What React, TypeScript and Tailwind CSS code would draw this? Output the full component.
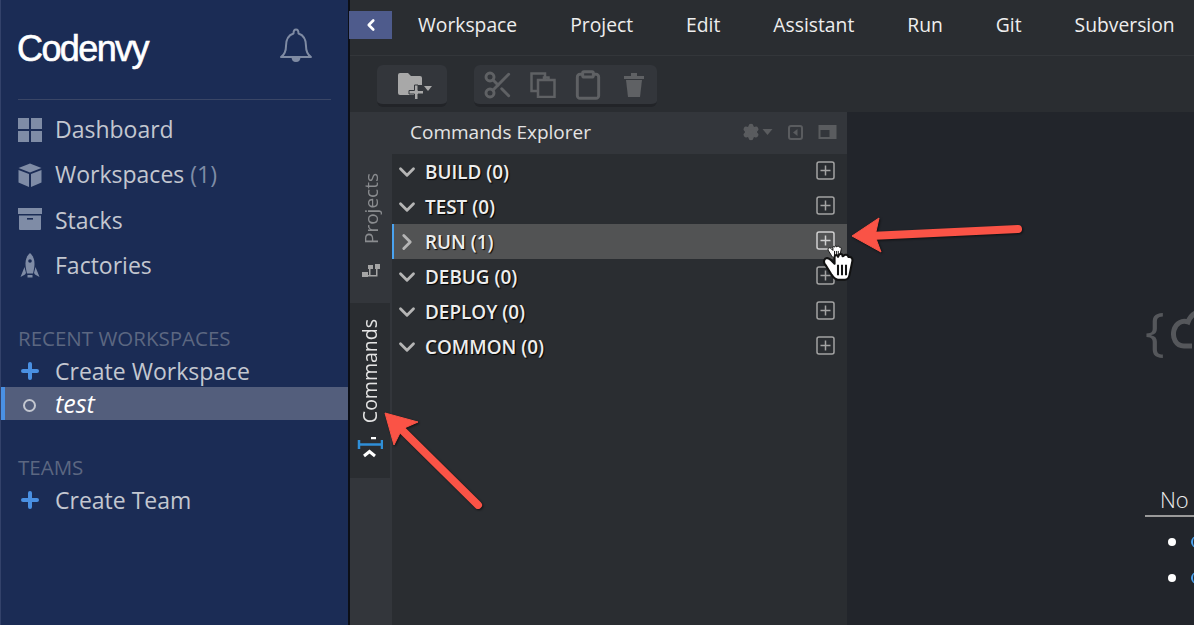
import { Scissors, Clipboard, Plus, Settings, ChevronDown, ChevronRight, ChevronLeft } from 'lucide-react'

const menuItems = ['Workspace', 'Project', 'Edit', 'Assistant', 'Run', 'Git', 'Subversion']
const commandGroups = [
    { name: 'BUILD (0)' },
    { name: 'TEST (0)' },
    { name: 'RUN (1)', active: true },
    { name: 'DEBUG (0)' },
    { name: 'DEPLOY (0)' },
    { name: 'COMMON (0)' },
]

function DashboardIcon() {
    return (
        <svg width="26" height="26" viewBox="0 0 26 26" fill="#7f8ca6">
            <rect x="1" y="1" width="11" height="11" />
            <rect x="14" y="1" width="11" height="11" />
            <rect x="1" y="14" width="11" height="11" />
            <rect x="14" y="14" width="11" height="11" />
        </svg>
    )
}

function CubeIcon() {
    return (
        <svg width="26" height="26" viewBox="0 0 26 26" fill="#7f8ca6">
            <path d="M13 1.500 24.500 6 13 10.500 1.500 6z" />
            <path d="M1.500 8 12 12v13L1.500 20.500z" />
            <path d="M24.500 8 14 12v13l10.500-4.500z" />
        </svg>
    )
}

function StacksIcon() {
    return (
        <svg width="26" height="26" viewBox="0 0 26 26" fill="#7f8ca6">
            <rect x="1" y="1" width="24" height="6" />
            <path d="M2 8.500h22V22a1 1 0 0 1-1 1H3a1 1 0 0 1-1-1z" />
            <rect x="10" y="11" width="6" height="1.600" fill="#1b2c55" />
        </svg>
    )
}

function RocketIcon() {
    return (
        <svg width="26" height="26" viewBox="0 0 26 26" fill="#7f8ca6">
            <path d="M13 0c3.500 3 4.500 7 4.500 10.500 0 3.500-.8 7-1.500 10h-6c-.7-3-1.500-6.500-1.500-10C8.500 7 9.500 3 13 0z" />
            <circle cx="13" cy="8" r="1.800" fill="#1b2c55" />
            <path d="M7.500 14 3.500 24l4.500-2.500 1-1.500zM18.500 14l4 10-4.500-2.500-1-1.500z" />
            <rect x="10.500" y="22" width="5" height="2.500" />
        </svg>
    )
}

function BellIcon() {
    return (
        <svg width="36" height="36" viewBox="0 0 36 36" fill="none" stroke="#7f8ba3" strokeWidth="2">
            <path d="M3 30c3-2 5-5 5-11 0-7 3-11 7.500-12.500C15.500 4 16.500 2.500 18 2.500S20.500 4 20.500 6.500C25 8 28 12 28 19c0 6 2 9 5 11z" strokeLinejoin="round" />
            <path d="M14.500 30c0 2.500 1.500 4 3.500 4s3.500-1.500 3.500-4" fill="#7f8ba3" />
        </svg>
    )
}

function NavRow({ icon, label, count }: { icon: React.ReactNode; label: string; count?: string }) {
    return (
        <div className="flex h-[45.3px] items-center pl-[16px]">
            <span className="flex w-[38px]">{icon}</span>
            <span className="text-[23px] leading-none text-[#c3c7d0]">
                {label}
                {count && <span className="text-[#7f8ca6]"> {count}</span>}
            </span>
        </div>
    )
}

function FolderPlusIcon() {
    return (
        <svg width="36" height="28" viewBox="0 0 36 28" fill="#a8a8a8">
            <path d="M1 3a2 2 0 0 1 2-2h8l3 3h9a2 2 0 0 1 2 2v7H19v10H3a2 2 0 0 1-2-2z" />
            <path d="M17.500 13h3.500v5.500h5.500V22H21v5.500h-3.500V22H12v-3.500h5.500z" stroke="#33363b" strokeWidth="1" />
            <path d="M27 14h8l-4 5z" />
        </svg>
    )
}

function CopyIcon() {
    return (
        <svg width="26" height="26" viewBox="0 0 26 26" fill="none" stroke="#5f6164" strokeWidth="2.500">
            <path d="M8 19H1.500V1.500H15V7" />
            <path d="M8 8h16.500v17H8z" />
            <path d="M14 8V5.500h4.500V8" />
        </svg>
    )
}

function TrashIcon() {
    return (
        <svg width="22" height="26" viewBox="0 0 22 26" fill="#5f6164">
            <path d="M1 4h20v3H1zM8 1h6v3H8z" />
            <path d="M3 8h16l-2 17H5z" />
        </svg>
    )
}

function ProjectsTabIcon() {
    return (
        <svg width="18" height="14" viewBox="0 0 18 14" fill="#a5a5a5">
            <rect x="0" y="8" width="6" height="5" />
            <rect x="6" y="1" width="5" height="4" />
            <rect x="13" y="0" width="5" height="5" />
            <path d="M7 5h1.500v6H14V5h1.500v7.500H6V11h1z" />
        </svg>
    )
}

function CommandsTabIcon() {
    return (
        <svg width="26" height="22" viewBox="0 0 26 22">
            <path d="M2 3v9M25 3v9" stroke="#2f8fd8" strokeWidth="2.500" />
            <path d="M2 7.500h23" stroke="#2f8fd8" strokeWidth="2.500" />
            <path d="M14 1h5" stroke="#fff" strokeWidth="2.500" />
            <path d="M7 19l5.500-4.500L18 19" fill="none" stroke="#fff" strokeWidth="3" />
        </svg>
    )
}

function HandCursor({ size, className }: { size: number; className: string }) {
    return (
        <svg width={size} height={size} viewBox="0 0 28 28" className={className}>
            <path
                d="M2 9C3 6 6 7 8 9l3 3V6c0-2 3-2 3 0l.5-1c.5-2 3.500-2 3.500.5l1-.5c1-1.500 4-1 4 1h1c2 0 3 2 2.500 4L24 22c-.5 3-2 4-4 4h-6c-3 0-4-2-6-5L3 13c-1-1-1.500-2.500-1-4z"
                fill="#fff"
                stroke="#111"
                strokeWidth="1.800"
                strokeLinejoin="round"
            />
            <path d="M14 13v9M17.500 13v9M21 13v9" stroke="#111" strokeWidth="1.800" />
        </svg>
    )
}

export default function App() {
    return (
        <div className="relative flex h-[625px] w-[1194px] overflow-hidden font-['Open_Sans',sans-serif]">
            <aside className="w-[348px] shrink-0 border-l border-[#33426a] bg-[#1b2c55]">
                <div className="flex h-[99px] items-start justify-between pl-[16px] pr-[34px] pt-[27px]">
                    <span className="mt-[4px] font-['Liberation_Sans',sans-serif] text-[36px] leading-none font-normal tracking-[-1.600px] text-white [-webkit-text-stroke:0.6px_#fff]">
                        Codenvy
                    </span>
                    <BellIcon />
                </div>
                <div className="mx-[17px] h-px bg-[#3a4666]" />
                <nav className="mt-[7px]">
                    <NavRow icon={<DashboardIcon />} label="Dashboard" />
                    <NavRow icon={<CubeIcon />} label="Workspaces" count="(1)" />
                    <NavRow icon={<StacksIcon />} label="Stacks" />
                    <NavRow icon={<RocketIcon />} label="Factories" />
                </nav>
                <div className="mt-[36px] pl-[17px] text-[20.500px] leading-[28px] whitespace-nowrap text-[#5c6781]">RECENT WORKSPACES</div>
                <div className="mt-[3px] flex h-[32px] items-center pl-[16px] text-[23px] text-[#c3c7d0]">
                    <span className="flex w-[38px] pl-[1px]">
                        <Plus size={24} strokeWidth={4} color="#4a90e2" />
                    </span>
                    Create Workspace
                </div>
                <div className="flex h-[33px] items-center border-l-4 border-[#4a90e2] bg-[#535e7c] pl-[18px] text-[25px] text-white italic">
                    <span className="mr-[19px] mt-[3px] h-[13px] w-[13px] rounded-full border-2 border-[#c3c7d0]" />
                    test
                </div>
                <div className="mt-[33px] pl-[17px] text-[20.500px] leading-[28px] text-[#5c6781]">TEAMS</div>
                <div className="mt-[3px] flex h-[32px] items-center pl-[16px] text-[23px] text-[#c3c7d0]">
                    <span className="flex w-[38px] pl-[1px]">
                        <Plus size={24} strokeWidth={4} color="#4a90e2" />
                    </span>
                    Create Team
                </div>
            </aside>

            <main className="flex min-w-0 flex-1 flex-col border-l-2 border-[#0c0f16] bg-[#2a2d31]">
                <header className="flex h-[56px] shrink-0 items-start border-b border-[#33363a] pt-[11px]">
                    <button className="ml-[-1px] flex h-[28px] w-[43px] items-center justify-center bg-[#4e5b8c]">
                        <ChevronLeft size={18} strokeWidth={3.5} color="#fff" />
                    </button>
                    <div className="ml-[26px] flex h-[28px] items-center gap-[53px] text-[19.300px] font-medium whitespace-nowrap text-[#eeeeee]">
                        {menuItems.map((item) => (
                            <span key={item}>{item}</span>
                        ))}
                    </div>
                </header>

                <div className="flex h-[56px] shrink-0 items-start gap-[27px] pl-[27px] pt-[9px]">
                    <div className="flex h-[42px] w-[70px] items-center justify-center rounded-md border-b-[3px] border-[#222428] bg-[#33363b] pl-[6px] pt-[2px]">
                        <FolderPlusIcon />
                    </div>
                    <div className="flex h-[42px] w-[183px] items-center rounded-md border-b-[3px] border-[#222428] bg-[#33363b] pl-[8px]">
                        <Scissors size={32} strokeWidth={2.2} color="#5f6164" />
                        <span className="ml-[16px] flex"><CopyIcon /></span>
                        <Clipboard size={32} strokeWidth={2.2} color="#5f6164" className="ml-[16px]" />
                        <span className="ml-[19px] flex"><TrashIcon /></span>
                    </div>
                </div>

                <div className="flex min-h-0 flex-1">
                    <div className="flex w-[497px] shrink-0 flex-col">
                        <div className="flex h-[42px] shrink-0 items-center justify-between bg-[#33363b] pb-[2px] pl-[60px] pr-[10px]">
                            <span className="text-[19px] text-[#e4e4e4]">Commands Explorer</span>
                            <div className="flex items-center">
                                <Settings size={18} fill="#5a5c5f" color="#5a5c5f" />
                                <svg width="11" height="6" viewBox="0 0 10 6" fill="#5a5c5f" className="ml-[2px]">
                                    <path d="M0 0h10L5 6z" />
                                </svg>
                                <svg width="15" height="15" viewBox="0 0 15 15" fill="none" stroke="#5a5c5f" strokeWidth="2" className="ml-[15px]">
                                    <rect x="1" y="1" width="13" height="13" rx="2" />
                                    <path d="M9.500 4v7L5 7.500z" fill="#5a5c5f" strokeWidth="0" />
                                </svg>
                                <svg width="19" height="14" viewBox="0 0 18 14" fill="#5a5c5f" className="ml-[15px]">
                                    <path d="M0 0h18v14H0zM2 5v7h9V5z" fillRule="evenodd" />
                                </svg>
                            </div>
                        </div>
                        <div className="flex min-h-0 flex-1">
                            <div className="flex w-[42px] shrink-0 flex-col bg-[#33363b]">
                                <div className="flex h-[149px] shrink-0 flex-col items-center justify-end pb-[25px]">
                                    <span className="rotate-180 text-[19px] leading-none text-[#8a8c8f] [writing-mode:vertical-rl]">Projects</span>
                                    <span className="mt-[20px] flex"><ProjectsTabIcon /></span>
                                </div>
                                <div className="flex h-[175px] w-[40px] shrink-0 flex-col items-center justify-end bg-[#2a2d31] pb-[19px]">
                                    <span className="rotate-180 text-[19.500px] leading-none text-[#e4e4e4] [writing-mode:vertical-rl]">Commands</span>
                                    <span className="mt-[14px] flex"><CommandsTabIcon /></span>
                                </div>
                            </div>
                            <div className="min-w-0 flex-1 bg-[#2a2d31]">
                                {commandGroups.map((group) => (
                                    <div
                                        key={group.name}
                                        className={`flex h-[35px] items-center justify-between pr-[12px] ${group.active ? 'border-l-2 border-[#4aa3f0] bg-[#525354] pl-0' : 'pl-[2px]'}`}
                                    >
                                        <div className="flex items-center pt-[2px]">
                                            {group.active ? (
                                                <ChevronRight size={26} strokeWidth={2.6} color="#b5b5b5" className="mr-[5px]" />
                                            ) : (
                                                <ChevronDown size={26} strokeWidth={2.6} color="#b5b5b5" className="mr-[5px]" />
                                            )}
                                            <span className="text-[18.900px] font-semibold text-[#eeeeee] [text-shadow:1px_1px_1px_#000]">{group.name}</span>
                                        </div>
                                        <svg width="19" height="19" viewBox="0 0 19 19" fill="none" stroke={group.active ? '#d0d0d0' : '#a3a3a3'} strokeWidth="1.500" className="mb-[2px]">
                                            <rect x="1" y="1" width="17" height="17" rx="2" />
                                            <path d="M9.500 4.500v10M4.500 9.500h10" />
                                        </svg>
                                    </div>
                                ))}
                            </div>
                        </div>
                    </div>

                    <section className="min-w-0 flex-1 overflow-hidden bg-[#22252b] pl-[298px] text-[#eeeeee]">
                        <div className="mt-[188px] flex h-[60px] items-center whitespace-nowrap text-[#55575b]">
                            <span className="text-[52px] leading-none font-normal">{'{'}</span>
                            <svg width="60" height="44" viewBox="0 0 60 44" fill="none" stroke="#55575b" strokeWidth="5" className="ml-[5px] shrink-0">
                                <path d="M22 38H14C6 38 2 30 4 22 6 15 12 12 18 14 21 6 28 2 36 4" />
                            </svg>
                        </div>
                        <div className="mt-[123px] w-[400px] border-b-2 border-[#9a9a9a] pl-[15px] text-[22px] leading-[32px] font-light whitespace-nowrap">
                            No
                        </div>
                        <ul className="mt-[7px] pl-[23px]">
                            {['first', 'second'].map((item) => (
                                <li key={item} className="flex h-[36px] items-center whitespace-nowrap">
                                    <span className="h-[8px] w-[8px] shrink-0 rounded-full bg-white" />
                                    <span className="ml-[15px] h-[12px] w-[6px] shrink-0 rounded-l-full border-l-2 border-[#4aa3f0]" />
                                </li>
                            ))}
                        </ul>
                    </section>
                </div>
            </main>

            {/* annotation arrows and cursors on top of the screenshot */}
            <svg width="1194" height="625" viewBox="0 0 1194 625" className="pointer-events-none absolute left-0 top-0">
                <g fill="#fa5346" stroke="#fa5346" style={{ filter: 'drop-shadow(1px 1px 1px rgba(0,0,0,.6))' }}>
                    <path d="M1018 229 870 236" strokeWidth="8" strokeLinecap="round" />
                    <path d="M852 236 879 218 875 236 881 252z" strokeWidth="1" strokeLinejoin="round" />
                    <path d="M478 505 400 428" strokeWidth="8" strokeLinecap="round" />
                    <path d="M385 413 418 422 402 429 394 445z" strokeWidth="1" strokeLinejoin="round" />
                </g>
            </svg>
            <HandCursor size={15} className="pointer-events-none absolute left-[827px] top-[244px]" />
            <HandCursor size={32} className="pointer-events-none absolute left-[822px] top-[250px]" />
        </div>
    )
}
